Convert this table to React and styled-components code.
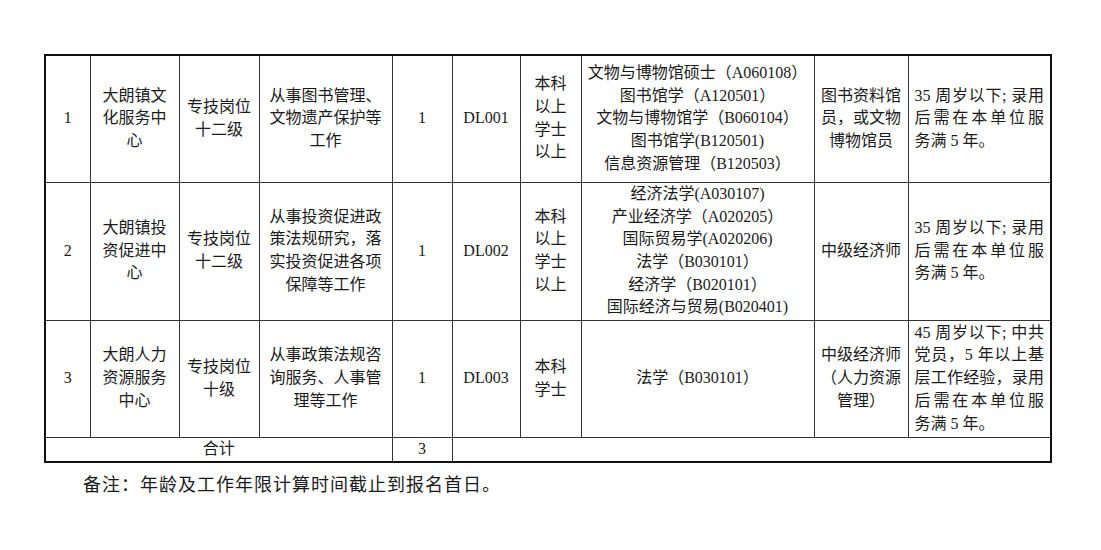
import React from 'react'
import styled, { createGlobalStyle } from 'styled-components'

const GlobalStyle = createGlobalStyle`
  html, body {
    margin: 0;
    padding: 0;
    background: #fff;
  }
`

const Page = styled.div`
  padding: 54px 0 0 44px;
  font-family: "Liberation Serif", "Noto Sans CJK SC", serif;
  color: #1a1a1a;
`

const Table = styled.table`
  width: 1006px;
  border-collapse: collapse;
  table-layout: fixed;
  border: 2px solid #111;
  font-size: 16px;
  line-height: 22.7px;
`

const Col = styled.col`
  width: ${({ $w }) => $w}px;
`

const Row = styled.tr`
  height: ${({ $h }) => $h}px;
`

const Cell = styled.td`
  border: 1px solid #333;
  padding: 0 ${({ $px }) => ($px === undefined ? 3 : $px)}px;
  text-align: center;
  vertical-align: middle;
  white-space: nowrap;
`

const Line = styled.div`
  white-space: nowrap;
`

const Spread = styled.div`
  white-space: normal;
  text-align: justify;
  text-align-last: ${({ $last }) => ($last ? 'left' : 'justify')};
`

const Remark = styled.p`
  margin: 8px 0 0 39px;
  font-family: "Noto Sans CJK SC", sans-serif;
  font-size: 18px;
  line-height: 24px;
  letter-spacing: 1px;
  color: #1a1a1a;
`

const widths = [45, 89, 80, 133, 60, 68, 61, 233, 94, 143]

const rows = [
  {
    h: 127,
    no: '1',
    unit: ['大朗镇文', '化服务中', '心'],
    post: ['专技岗位', '十二级'],
    duty: ['从事图书管理、', '文物遗产保护等', '工作'],
    num: '1',
    code: 'DL001',
    edu: ['本科', '以上', '学士', '以上'],
    major: [
      '文物与博物馆硕士（A060108）',
      '图书馆学（A120501）',
      '文物与博物馆学（B060104）',
      '图书馆学(B120501)',
      '信息资源管理（B120503）',
    ],
    title: ['图书资料馆', '员，或文物', '博物馆员'],
    note: ['35 周岁以下; 录用', '后需在本单位服', '务满 5 年。'],
  },
  {
    h: 138,
    no: '2',
    unit: ['大朗镇投', '资促进中', '心'],
    post: ['专技岗位', '十二级'],
    duty: ['从事投资促进政', '策法规研究，落', '实投资促进各项', '保障等工作'],
    num: '1',
    code: 'DL002',
    edu: ['本科', '以上', '学士', '以上'],
    major: [
      '经济法学(A030107)',
      '产业经济学（A020205）',
      '国际贸易学(A020206)',
      '法学（B030101）',
      '经济学（B020101）',
      '国际经济与贸易(B020401)',
    ],
    title: ['中级经济师'],
    note: ['35 周岁以下; 录用', '后需在本单位服', '务满 5 年。'],
  },
  {
    h: 117,
    no: '3',
    unit: ['大朗人力', '资源服务', '中心'],
    post: ['专技岗位', '十级'],
    duty: ['从事政策法规咨', '询服务、人事管', '理等工作'],
    num: '1',
    code: 'DL003',
    edu: ['本科', '学士'],
    major: ['法学（B030101）'],
    title: ['中级经济师', '（人力资源', '管理）'],
    note: ['45 周岁以下; 中共', '党员，5 年以上基', '层工作经验，录用', '后需在本单位服', '务满 5 年。'],
  },
]

const Lines = ({ items }) => items.map((t, i) => <Line key={i}>{t}</Line>)

const App = () => {
  return (
    <Page>
      <GlobalStyle />
      <Table>
        <colgroup>
          {widths.map((w, i) => (
            <Col key={i} $w={w} />
          ))}
        </colgroup>
        <tbody>
          {rows.map((r) => (
            <Row key={r.no} $h={r.h}>
              <Cell>{r.no}</Cell>
              <Cell><Lines items={r.unit} /></Cell>
              <Cell><Lines items={r.post} /></Cell>
              <Cell><Lines items={r.duty} /></Cell>
              <Cell>{r.num}</Cell>
              <Cell>{r.code}</Cell>
              <Cell><Lines items={r.edu} /></Cell>
              <Cell><Lines items={r.major} /></Cell>
              <Cell><Lines items={r.title} /></Cell>
              <Cell $px={6}>
                {r.note.map((t, i) => (
                  <Spread key={i} $last={i === r.note.length - 1}>{t}</Spread>
                ))}
              </Cell>
            </Row>
          ))}
          <Row $h={25}>
            <Cell colSpan={4}>合计</Cell>
            <Cell>3</Cell>
            <Cell colSpan={5} />
          </Row>
        </tbody>
      </Table>
      <Remark>备注：年龄及工作年限计算时间截止到报名首日。</Remark>
    </Page>
  )
}

export default App
